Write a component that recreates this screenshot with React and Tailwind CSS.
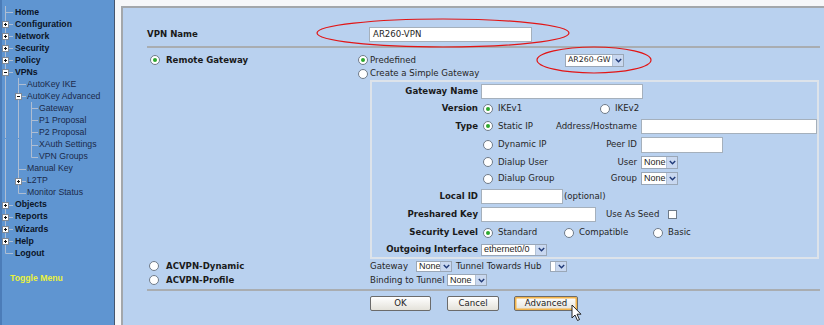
import React from "react";

const LINE = "#aebdd2";

// one gutter cell of the menu tree: "pass" = straight line, "mid"/"last" = connector
function TreeCell({ w, x, mode, box }) {
  const cx = x + 0.5;
  return (
    <svg width={w} viewBox={`0 0 ${w} 12`} preserveAspectRatio="none" className="shrink-0 h-full">
      {mode === "pass" && <line x1={cx} y1="0" x2={cx} y2="12" stroke={LINE} />}
      {mode === "mid" && <line x1={cx} y1="0" x2={cx} y2="12" stroke={LINE} />}
      {mode === "last" && <line x1={cx} y1="0" x2={cx} y2="6.5" stroke={LINE} />}
      {mode !== "pass" && <line x1={cx} y1="6.5" x2={w - 1} y2="6.5" stroke={LINE} />}
      {box && (
        <g>
          <rect x={cx - 3} y={3.5} width="6" height="6" fill="#fff" stroke="#7d8794" />
          <line x1={cx - 1.5} y1="6.5" x2={cx + 1.5} y2="6.5" stroke="#111" />
          {box === "+" && <line x1={cx} y1="5" x2={cx} y2="8" stroke="#111" />}
        </g>
      )}
    </svg>
  );
}

const CELLS = [
  { w: 14, x: 5 },
  { w: 13, x: 4 },
  { w: 12, x: 4 },
];

// gutter: modes for each level cell
const MENU = [
  { t: "Home", g: ["mid"] },
  { t: "Configuration", g: ["mid"], box: "+" },
  { t: "Network", g: ["mid"], box: "+" },
  { t: "Security", g: ["mid"], box: "+" },
  { t: "Policy", g: ["mid"], box: "+" },
  { t: "VPNs", g: ["mid"], box: "-" },
  { t: "AutoKey IKE", g: ["pass", "mid"] },
  { t: "AutoKey Advanced", g: ["pass", "mid"], box: "-" },
  { t: "Gateway", g: ["pass", "pass", "mid"] },
  { t: "P1 Proposal", g: ["pass", "pass", "mid"] },
  { t: "P2 Proposal", g: ["pass", "pass", "mid"] },
  { t: "XAuth Settings", g: ["pass", "pass", "mid"] },
  { t: "VPN Groups", g: ["pass", "pass", "last"] },
  { t: "Manual Key", g: ["pass", "mid"] },
  { t: "L2TP", g: ["pass", "mid"], box: "+" },
  { t: "Monitor Status", g: ["pass", "last"] },
  { t: "Objects", g: ["mid"], box: "+" },
  { t: "Reports", g: ["mid"], box: "+" },
  { t: "Wizards", g: ["mid"], box: "+" },
  { t: "Help", g: ["mid"], box: "+" },
  { t: "Logout", g: ["last"] },
];

function Sidebar() {
  return (
    <div className="w-[114px] shrink-0 bg-[#5f95d1] shadow-[inset_2px_0_0_#4b7cb8] pt-[6px] font-['Liberation_Sans',Arial,sans-serif] text-[8.7px] leading-none">
      {MENU.map((m) => {
        const top = m.g.length === 1;
        return (
          <div key={m.t} className="flex items-center h-[12.06px]">
            {m.g.map((mode, i) => (
              <TreeCell
                key={i}
                w={CELLS[i].w}
                x={CELLS[i].x}
                mode={mode}
                box={i === m.g.length - 1 ? m.box : null}
              />
            ))}
            <span className={top ? "ml-[1px] font-bold text-[#0b1426]" : "text-[#1b2a4a]"}>{m.t}</span>
          </div>
        );
      })}
      <div className="mt-[13px] h-[12px] flex items-center pl-[10px] font-bold text-[#eaf23c]">Toggle Menu</div>
    </div>
  );
}

function Radio({ on }) {
  return (
    <span className="inline-flex w-[10px] h-[10px] shrink-0 rounded-full border border-[#6f7b89] bg-white items-center justify-center">
      {on && <span className="w-[4px] h-[4px] rounded-full bg-[#2ea82e]" />}
    </span>
  );
}

function RadioLabel({ on, text, className = "" }) {
  return (
    <span className={`flex items-center gap-[5px] ${className}`}>
      <Radio on={on} />
      <span>{text}</span>
    </span>
  );
}

function Input({ className = "", children }) {
  return (
    <div className={`flex items-center bg-white border border-[#a5b0bc] pl-[3px] shrink-0 ${className}`}>
      {children}
    </div>
  );
}

function Select({ value, className = "", arial = true }) {
  return (
    <div className={`flex bg-white border border-[#9aa7b7] shrink-0 ${className}`}>
      <span
        className={`flex-1 flex items-center pl-[2px] overflow-hidden whitespace-nowrap ${
          arial ? "font-['Liberation_Sans',Arial,sans-serif] text-[9px]" : "text-[7.8px]"
        }`}
      >
        {value}
      </span>
      <span className="w-[11px] flex items-center justify-center bg-[#c9d8f0] border-l border-[#b3c2d6]">
        <svg width="7" height="5" viewBox="0 0 7 5">
          <path d="M0.8 1 L3.5 3.8 L6.2 1" fill="none" stroke="#203a78" strokeWidth="1.4" />
        </svg>
      </span>
    </div>
  );
}

function Row({ className, label, children }) {
  return (
    <div className={`flex items-center ${className}`}>
      <span className="w-[106px] text-right font-bold text-[#1a1a1a] whitespace-nowrap">{label}</span>
      <div className="ml-[3px] flex items-center">{children}</div>
    </div>
  );
}

function Button({ children, className = "" }) {
  return (
    <div
      className={`h-[15px] flex items-center justify-center rounded-[2px] border border-[#6b6b6b] bg-gradient-to-b from-white to-[#e4e2da] text-[#222] ${className}`}
    >
      {children}
    </div>
  );
}

export default function App() {
  return (
    <div className="relative flex w-[824px] h-[325px] overflow-hidden bg-white">
      <Sidebar />
      <div className="w-px shrink-0 bg-[#46566e]" />
      <div className="flex-1 flex flex-col bg-[#f6f7f9] pl-[6px] pt-[6px]">
        <div className="flex-1 border-t-2 border-l-2 border-[#a3a7ab] bg-[#b9d1ef] pl-[24px] pr-[4px] font-['DejaVu_Sans',Verdana,sans-serif] text-[8.6px] leading-none text-[#262626]">
          {/* VPN name */}
          <div className="mt-[15px] h-[23px] flex items-center">
            <span className="w-[211px] font-bold text-[#1a1a1a]">VPN Name</span>
            <Input className="ml-[11px] w-[163px] h-[15px]">AR260-VPN</Input>
          </div>
          <div className="h-[2px] bg-[#a9adb1]" />

          {/* Remote gateway */}
          <div className="flex pt-[5px]">
            <div className="w-[211px] shrink-0">
              <div className="h-[14px] flex items-center gap-[6px] pl-[3px]">
                <Radio on />
                <span className="font-bold text-[#1a1a1a]">Remote Gateway</span>
              </div>
            </div>
            <div className="flex-1 flex flex-col">
              <div className="h-[14px] flex items-center">
                <Radio on />
                <span className="ml-[2px] w-[195px]">Predefined</span>
                <Select value="AR260-GW" arial={false} className="w-[59px] h-[13px]" />
              </div>
              <div className="h-[13px] flex items-center">
                <Radio />
                <span className="ml-[2px]">Create a Simple Gateway</span>
              </div>

              <div className="ml-[12px] mr-[1px] border-2 border-[#dde3ea] flex flex-col">
                <Row className="h-[18px]" label="Gateway Name">
                  <Input className="w-[162px] h-[15px]" />
                </Row>
                <Row className="h-[17px]" label="Version">
                  <div className="w-[119px] flex items-center">
                    <RadioLabel on text="IKEv1" className="ml-[2px]" />
                  </div>
                  <RadioLabel text="IKEv2" />
                </Row>
                <Row className="h-[18px]" label="Type">
                  <div className="w-[156px] flex items-center justify-between">
                    <RadioLabel on text="Static IP" className="ml-[2px]" />
                    <span>Address/Hostname</span>
                  </div>
                  <Input className="ml-[4px] w-[176px] h-[15px]" />
                </Row>
                <Row className="h-[19px]" label="">
                  <div className="w-[156px] flex items-center justify-between">
                    <RadioLabel text="Dynamic IP" className="ml-[2px]" />
                    <span>Peer ID</span>
                  </div>
                  <Input className="ml-[4px] w-[82px] h-[16px]" />
                </Row>
                <Row className="h-[16px]" label="">
                  <div className="w-[156px] flex items-center justify-between">
                    <RadioLabel text="Dialup User" className="ml-[2px]" />
                    <span>User</span>
                  </div>
                  <Select value="None" className="ml-[4px] w-[37px] h-[13px]" />
                </Row>
                <Row className="h-[17px]" label="">
                  <div className="w-[156px] flex items-center justify-between">
                    <RadioLabel text="Dialup Group" className="ml-[2px]" />
                    <span>Group</span>
                  </div>
                  <Select value="None" className="ml-[4px] w-[37px] h-[13px]" />
                </Row>
                <Row className="h-[18px]" label="Local ID">
                  <Input className="w-[82px] h-[15px]" />
                  <span className="ml-[1px]">(optional)</span>
                </Row>
                <Row className="h-[18px]" label="Preshared Key">
                  <Input className="w-[115px] h-[15px]" />
                  <span className="ml-[10px] w-[62px]">Use As Seed</span>
                  <span className="w-[9px] h-[9px] border border-[#6f7b89] bg-white" />
                </Row>
                <Row className="h-[19px]" label="Security Level">
                  <div className="w-[83px] flex items-center">
                    <RadioLabel on text="Standard" className="ml-[2px]" />
                  </div>
                  <div className="w-[89px] flex items-center">
                    <RadioLabel text="Compatible" />
                  </div>
                  <RadioLabel text="Basic" />
                </Row>
                <Row className="h-[15px]" label="Outgoing Interface">
                  <Select value="ethernet0/0" className="w-[66px] h-[12px]" />
                </Row>
              </div>
            </div>
          </div>

          {/* ACVPN */}
          <div className="flex">
            <div className="w-[211px] shrink-0">
              <div className="h-[14px] flex items-center gap-[7px] pl-[2px]">
                <Radio />
                <span className="font-bold text-[#1a1a1a]">ACVPN-Dynamic</span>
              </div>
              <div className="h-[14px] flex items-center gap-[7px] pl-[2px]">
                <Radio />
                <span className="font-bold text-[#1a1a1a]">ACVPN-Profile</span>
              </div>
            </div>
            <div className="flex-1 pl-[12px]">
              <div className="h-[14px] flex items-center">
                <span className="w-[46px]">Gateway</span>
                <Select value="None" className="w-[36px] h-[11px]" />
                <span className="ml-[4px] w-[94px]">Tunnel Towards Hub</span>
                <Select value="" className="w-[17px] h-[11px]" />
              </div>
              <div className="h-[14px] flex items-center">
                <span className="w-[77px]">Binding to Tunnel</span>
                <Select value="None" className="w-[40px] h-[12px]" />
              </div>
            </div>
          </div>
          <div className="mt-[2px] h-[2px] bg-[#a9adb1]" />

          {/* buttons */}
          <div className="mt-[5px] flex items-center pl-[223px]">
            <Button className="w-[61px]">OK</Button>
            <Button className="ml-[16px] w-[52px]">Cancel</Button>
            <Button className="ml-[15px] w-[64px] shadow-[inset_0_0_0_1.5px_#f3b449]">Advanced</Button>
          </div>
        </div>
      </div>

      {/* annotations and mouse pointer drawn over the page */}
      <svg className="absolute inset-0 pointer-events-none" width="824" height="325" viewBox="0 0 824 325">
        <ellipse cx="443" cy="33" rx="126" ry="14" fill="none" stroke="#e21515" strokeWidth="1.2" />
        <ellipse cx="594" cy="60" rx="57" ry="13" fill="none" stroke="#e21515" strokeWidth="1.2" />
        <path
          d="M572 305 L572 318 L575 315 L577.5 320.5 L579.5 319.6 L577 314.2 L581 314.2 Z"
          fill="#fff"
          stroke="#111"
          strokeWidth="0.9"
          strokeLinejoin="round"
        />
      </svg>
    </div>
  );
}
